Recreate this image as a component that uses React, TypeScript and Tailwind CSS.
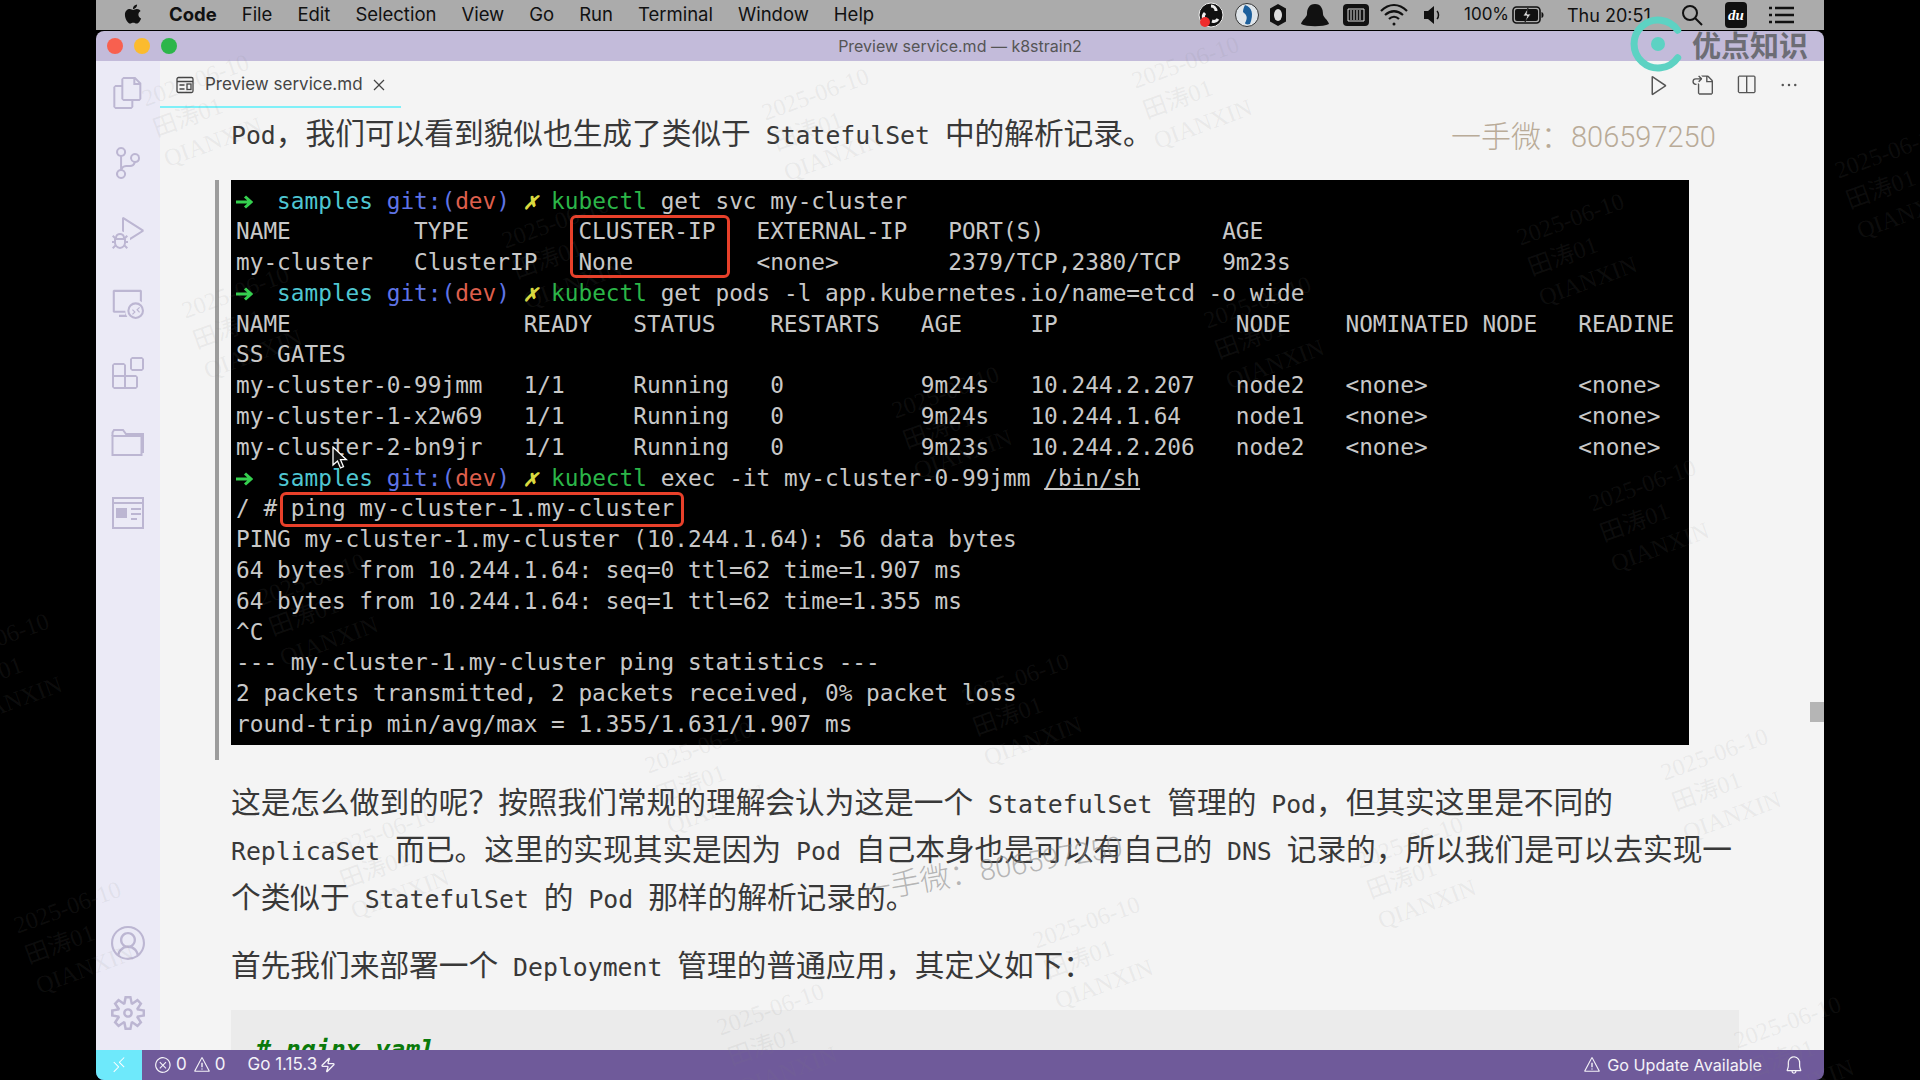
import React from "react";
import { FaApple } from "react-icons/fa";
import { Zap } from "lucide-react";
import {
  VscAccount,
  VscBell,
  VscClose,
  VscDebugAlt,
  VscEllipsis,
  VscError,
  VscExtensions,
  VscFiles,
  VscGoToFile,
  VscPlay,
  VscRemote,
  VscRemoteExplorer,
  VscSettingsGear,
  VscSourceControl,
  VscSplitHorizontal,
  VscWarning,
} from "react-icons/vsc";

const menus = ["File", "Edit", "Selection", "View", "Go", "Run", "Terminal", "Window", "Help"];

// watermark boxes, left / top of each stamp
const stamps = [
  [150, 48], [1140, 30], [770, 62], [1843, 120], [510, 190], [190, 260], [1525, 187],
  [1212, 270], [900, 360], [1597, 453], [266, 547], [-50, 607], [970, 647],
  [653, 715], [1669, 722], [337, 800], [1364, 810], [22, 875], [1041, 890], [725, 977], [1742, 990],
];

const FolderIcon = () => (
  <svg width="34" height="30" viewBox="0 0 34 30" fill="none" stroke="currentColor" strokeWidth="2">
    <path d="M1.5 27V8h29v19z" />
    <path d="M1.5 8V4.5L3 2h9l3 4h17v18h-2" />
  </svg>
);

const PanelIcon = () => (
  <svg width="34" height="34" viewBox="0 0 34 34" fill="none" stroke="currentColor" strokeWidth="2">
    <path d="M2 2h30v30H2zM2 7h30" />
    <path d="M5 12h11v10H5z" fill="currentColor" stroke="none" />
    <path d="M20 13h10M20 18h10M20 23h6" />
  </svg>
);

const PreviewTabIcon = () => (
  <svg width="18" height="18" viewBox="0 0 18 18" fill="none" stroke="currentColor" strokeWidth="1.300">
    <rect x="1" y="1.500" width="16" height="15" rx="1.500" />
    <path d="M1 5.500h16M3.500 9h5M3.500 13h5" />
    <rect x="11" y="8" width="4" height="5.500" />
  </svg>
);

const topIcons = [
  <VscFiles key="files" size={32} />,
  <VscSourceControl key="scm" size={32} />,
  <VscDebugAlt key="debug" size={32} />,
  <VscRemoteExplorer key="remote" size={32} />,
  <VscExtensions key="ext" size={32} />,
  <FolderIcon key="folder" />,
  <PanelIcon key="panel" />,
];

const Prompt = ({ children }: { children: React.ReactNode }) => (
  <div>
    <span className="inline-block w-[41.100px] align-middle">
      <svg width="17" height="14" viewBox="0 0 17 14" fill="none" stroke="#35d04f" strokeWidth="3">
        <path d="M0 7h14M9 1.500L15 7l-6 5.500" />
      </svg>
    </span>
    <span className="text-[#4fc6d2]">samples</span> <span className="text-[#5f74e6]">git:(</span>
    <span className="text-[#dd5f4c]">dev</span>
    <span className="text-[#5f74e6]">)</span> <span className="font-bold italic text-[#d9d93f]">✗</span>{" "}
    <span className="text-[#2bb648]">kubectl</span> {children}
  </div>
);

const Code = ({ children }: { children: string }) => (
  <span className="whitespace-pre text-[24.8px] leading-none [font-family:'DejaVu_Sans_Mono',monospace]">{children}</span>
);

const Terminal = () => (
  <div className="relative h-[565px] w-[1458px] overflow-hidden bg-black pl-[5px] pt-[6px] whitespace-pre text-[#c8c8c8] [font-family:'DejaVu_Sans_Mono',monospace] text-[22.76px] leading-[30.8px]">
    <Prompt>get svc my-cluster</Prompt>
    <div>NAME         TYPE        CLUSTER-IP   EXTERNAL-IP   PORT(S)             AGE</div>
    <div>my-cluster   ClusterIP   None         &lt;none&gt;        2379/TCP,2380/TCP   9m23s</div>
    <Prompt>get pods -l app.kubernetes.io/name=etcd -o wide</Prompt>
    <div>NAME                 READY   STATUS    RESTARTS   AGE     IP             NODE    NOMINATED NODE   READINE</div>
    <div>SS GATES</div>
    <div>my-cluster-0-99jmm   1/1     Running   0          9m24s   10.244.2.207   node2   &lt;none&gt;           &lt;none&gt;</div>
    <div>my-cluster-1-x2w69   1/1     Running   0          9m24s   10.244.1.64    node1   &lt;none&gt;           &lt;none&gt;</div>
    <div>my-cluster-2-bn9jr   1/1     Running   0          9m23s   10.244.2.206   node2   &lt;none&gt;           &lt;none&gt;</div>
    <Prompt>
      <>
        exec -it my-cluster-0-99jmm <span className="underline">/bin/sh</span>
      </>
    </Prompt>
    <div>/ # ping my-cluster-1.my-cluster</div>
    <div>PING my-cluster-1.my-cluster (10.244.1.64): 56 data bytes</div>
    <div>64 bytes from 10.244.1.64: seq=0 ttl=62 time=1.907 ms</div>
    <div>64 bytes from 10.244.1.64: seq=1 ttl=62 time=1.355 ms</div>
    <div>^C</div>
    <div>--- my-cluster-1.my-cluster ping statistics ---</div>
    <div>2 packets transmitted, 2 packets received, 0% packet loss</div>
    <div>round-trip min/avg/max = 1.355/1.631/1.907 ms</div>

    {/* red annotation boxes */}
    <div className="absolute left-[339px] top-[35px] h-[63px] w-[160px] rounded-[6px] border-[3px] border-[#e8402a]" />
    <div className="absolute left-[49px] top-[312px] h-[35px] w-[404px] rounded-[6px] border-[3px] border-[#e8402a]" />

    {/* mouse pointer */}
    <svg className="absolute left-[101px] top-[266px]" width="16" height="24" viewBox="0 0 16 24">
      <path d="M1 1v18l4.5-4 3 7 3-1.300-3-7h6z" fill="#111" stroke="#fff" strokeWidth="1.300" />
    </svg>
  </div>
);

const MenuBarRight = () => (
  <div className="flex items-center text-[#111]">
    {/* obs */}
    <svg width="26" height="26" viewBox="0 0 26 26">
      <circle cx="13" cy="13" r="12" fill="#111" stroke="#eee" />
      <path d="M13 4a5 5 0 0 1 5 5M6 17a5 5 0 0 1 1-6M20 17a5 5 0 0 1-6 2" stroke="#eee" strokeWidth="3" fill="none" />
      <circle cx="7" cy="20" r="5" fill="#ee2b2b" />
    </svg>
    <svg width="24" height="26" viewBox="0 0 24 26" className="ml-[11px]">
      <circle cx="12" cy="13" r="11.500" fill="#dfe5ea" stroke="#333" />
      <path d="M10 3c7 2 9 9 5 19-3 1-5 0-5-1 3-5 2-8-2-11 0-3 1-5 2-7z" fill="#1c5f9c" />
    </svg>
    <svg width="20" height="24" viewBox="0 0 20 24" className="ml-[9px]">
      <path d="M10 1l8 4.500v13L10 23l-8-4.500v-13z" fill="#111" />
      <ellipse cx="10" cy="12" rx="4" ry="6" fill="#ddd" />
    </svg>
    <svg width="30" height="24" viewBox="0 0 30 24" className="ml-[12px]">
      <path d="M15 1c6 0 8 5 8 10 0 3 5 6 6 10-6 3-22 3-28 0 1-4 6-7 6-10 0-5 2-10 8-10z" fill="#111" />
    </svg>
    <svg width="26" height="24" viewBox="0 0 26 24" className="ml-[13px]">
      <rect x="0" y="1" width="26" height="22" rx="4" fill="#111" />
      <path d="M5 6h16v12H5z" fill="none" stroke="#ddd" />
      <path d="M8 7v10M11 7v10M14 7v10M17 7v10" stroke="#ddd" />
    </svg>
    <svg width="28" height="24" viewBox="0 0 28 24" fill="none" stroke="#111" strokeWidth="2.200" className="ml-[11px]">
      <path d="M1 8c8-8 18-8 26 0M5 12c6-5 12-5 18 0M9 16c3-3 7-3 10 0" />
      <circle cx="14" cy="21" r="1.500" fill="#111" stroke="none" />
    </svg>
    <svg width="18" height="20" viewBox="0 0 18 20" className="ml-[16px]">
      <path d="M0 6h4l6-5v18l-6-5H0z" fill="#111" />
      <path d="M13 6c2 2 2 6 0 8" stroke="#111" strokeWidth="1.500" fill="none" />
    </svg>
    <span className="ml-[22px] w-[48px] text-[17px]">100%</span>
    <svg width="32" height="20" viewBox="0 0 32 20">
      <rect x="1" y="2" width="27" height="16" rx="3.500" fill="none" stroke="#111" strokeWidth="1.600" />
      <rect x="3" y="4" width="23" height="12" rx="2" fill="#111" />
      <path d="M29.500 7v6c1.500-.5 2-1.500 2-3s-.5-2.500-2-3z" fill="#111" />
      <path d="M16 3l-5 8h4l-2 6 6-8h-4z" fill="#ddd" stroke="#111" strokeWidth=".8" />
    </svg>
    <span className="ml-[23px] w-[88px] text-[18px]">Thu 20:51</span>
    <svg width="24" height="24" viewBox="0 0 24 24" fill="none" stroke="#111" strokeWidth="2" className="ml-[25px]">
      <circle cx="10" cy="10" r="7" />
      <path d="M15 15l7 7" />
    </svg>
    <span className="ml-[21px] flex h-[26px] w-[22px] items-center justify-center rounded-[4px] bg-[#111] text-[15px] font-bold italic text-white [font-family:'Liberation_Serif',serif]">
      du
    </span>
    <svg width="26" height="20" viewBox="0 0 26 20" stroke="#111" strokeWidth="2.600" className="ml-[21px]">
      <path d="M7 3h19M7 10h19M7 17h19M1 3h3M1 10h3M1 17h3" />
    </svg>
  </div>
);

export default function App() {
  return (
    <div className="relative flex h-[1080px] w-[1920px] justify-center overflow-hidden bg-black [font-family:Inter,sans-serif]">
      <div className="flex w-[1728px] flex-col">
        <header className="flex h-[30px] shrink-0 items-center justify-between bg-[#ababab] pl-[26px] pr-[30px] text-[#111]">
          <div className="flex items-center gap-[25px] text-[18.500px]">
            <FaApple size={22} className="-mt-[2px]" />
            <span className="font-bold">Code</span>
            {menus.map((m) => (
              <span key={m}>{m}</span>
            ))}
          </div>
          <MenuBarRight />
        </header>

        <div className="mt-[1px] flex flex-1 flex-col overflow-hidden rounded-[8px]">
          {/* title bar */}
          <div className="relative flex h-[30px] shrink-0 items-center justify-center bg-[#c3bbda] text-[16px] text-[#555]">
            <div className="absolute left-[11px] flex gap-[11px]">
              <span className="h-[16px] w-[16px] rounded-full bg-[#f8604f]" />
              <span className="h-[16px] w-[16px] rounded-full bg-[#fbbb2e]" />
              <span className="h-[16px] w-[16px] rounded-full bg-[#2cb64a]" />
            </div>
            Preview service.md — k8strain2
          </div>

          <div className="flex min-h-0 flex-1">
            {/* activity bar */}
            <aside className="flex w-[64px] shrink-0 flex-col justify-between overflow-hidden bg-[#ebeaf6] pb-[2px] text-[#bcb6d2]">
              <div className="-mt-[3px] flex flex-col">
                {topIcons.map((icon, i) => (
                  <div key={i} className="flex h-[70px] items-center justify-center">
                    {icon}
                  </div>
                ))}
              </div>
              <div className="flex flex-col">
                <div className="flex h-[70px] items-center justify-center">
                  <VscAccount size={34} />
                </div>
                <div className="flex h-[70px] items-center justify-center">
                  <VscSettingsGear size={34} />
                </div>
              </div>
            </aside>

            <main className="flex min-w-0 flex-1 flex-col bg-[#f4f4f4]">
              {/* tab row */}
              <div className="flex h-[47px] shrink-0 items-center justify-between">
                <div className="flex h-full w-[241px] items-center border-b-2 border-[#7ff0f8] pl-[16px] pt-[2px] text-[17px] text-[#444]">
                  <PreviewTabIcon />
                  <span className="ml-[11px]">Preview service.md</span>
                  <VscClose size={20} className="ml-[6px]" />
                </div>
                <div className="flex items-center gap-[22px] pr-[25px] text-[#555]">
                  <VscPlay size={24} className="-mr-[2px]" />
                  <VscGoToFile size={22} />
                  <VscSplitHorizontal size={22} />
                  <VscEllipsis size={20} />
                </div>
              </div>

              {/* markdown preview */}
              <div className="relative min-h-0 flex-1 overflow-hidden pl-[55px] text-[29.7px] leading-[47.5px] text-[#383838] [font-family:'Noto_Sans_CJK_SC',sans-serif]">
                <p className="ml-[16px] whitespace-nowrap">
                  <Code>Pod</Code>，我们可以看到貌似也生成了类似于<Code> StatefulSet </Code>中的解析记录。
                </p>
                <blockquote className="mt-[24px] h-[580px] border-l-4 border-[#9c9c9c] pl-[12px]">
                  <Terminal />
                </blockquote>
                <p className="ml-[16px] mt-[17px] whitespace-nowrap">
                  这是怎么做到的呢？按照我们常规的理解会认为这是一个<Code> StatefulSet </Code>管理的<Code> Pod</Code>，但其实这里是不同的
                  <br />
                  <Code>ReplicaSet </Code>而已。这里的实现其实是因为<Code> Pod </Code>自己本身也是可以有自己的<Code> DNS </Code>记录的，所以我们是可以去实现一
                  <br />
                  个类似于<Code> StatefulSet </Code>的<Code> Pod </Code>那样的解析记录的。
                </p>
                <p className="ml-[16px] mt-[21px] whitespace-nowrap">
                  首先我们来部署一个<Code> Deployment </Code>管理的普通应用，其定义如下：
                </p>
                <div className="ml-[16px] mt-[22px] h-[80px] w-[1508px] bg-[#ebebeb] pl-[25px] pt-[22px]">
                  <div className="text-[24.8px] font-bold italic leading-[36px] text-[#0b7a0b] [font-family:'DejaVu_Sans_Mono',monospace]">
                    # nginx.yaml
                  </div>
                </div>
                {/* scrollbar thumb */}
                <div className="absolute right-0 top-[594px] h-[20px] w-[14px] bg-[#b5b5b5]" />
              </div>
            </main>
          </div>

          {/* status bar */}
          <footer className="flex h-[30px] shrink-0 items-center justify-between bg-[#6f5a9a] pr-[20px] text-[17px] text-[#f4f2f8]">
            <div className="flex h-full items-center">
              <div className="flex h-full w-[46px] items-center justify-center bg-[#6ee9fb] text-white">
                <VscRemote size={18} />
              </div>
              <VscError size={18} className="ml-[12px]" />
              <span className="ml-[4px]">0</span>
              <VscWarning size={18} className="ml-[6px]" />
              <span className="ml-[4px]">0</span>
              <span className="ml-[22px]">Go 1.15.3</span>
              <Zap size={16} className="ml-[3px]" />
            </div>
            <div className="flex items-center">
              <VscWarning size={18} />
              <span className="ml-[6px] text-[16.200px]">Go Update Available</span>
              <VscBell size={20} className="ml-[22px]" />
            </div>
          </footer>
        </div>
      </div>

      {/* recording watermarks */}
      <div className="pointer-events-none absolute inset-0">
        {stamps.map(([left, top], i) => (
          <div
            key={i}
            className="absolute w-[125px] -rotate-[20deg] whitespace-nowrap text-[24px] leading-[32px] text-[#8080801a] [font-family:'Liberation_Serif','Noto_Sans_CJK_SC',serif]"
            style={{ left, top: top + 12 }}
          >
            2025-06-10
            <br />
            田涛01
            <br />
            QIANXIN
          </div>
        ))}
      </div>

      {/* course logo stamp */}
      <div className="absolute left-[1628px] top-[14px] flex items-center">
        <svg width="60" height="60" viewBox="0 0 60 60" fill="none">
          <path d="M49.700 16.200A24 24 0 1 0 49.700 43.800" stroke="#5dd2c3" strokeWidth="7" strokeLinecap="round" />
          <circle cx="30" cy="30" r="7" fill="#5dd2c3" />
        </svg>
        <span className="ml-[4px] text-[29px] font-bold leading-[36px] text-[#6d6d75] [font-family:'Noto_Sans_CJK_SC',sans-serif]">
          优点知识
        </span>
      </div>

      <div className="absolute left-[1451px] top-[114px] text-[30px] font-light leading-[40px] text-[#b9ab98] [font-family:'Noto_Sans_CJK_SC',sans-serif]">
        一手微：<span className="text-[29px] [font-family:Roboto,sans-serif]">806597250</span>
      </div>
      <div className="absolute left-[859px] top-[846px] -rotate-[10deg] text-[30px] font-light leading-[40px] text-[#8a8a8a99] [font-family:'Noto_Sans_CJK_SC',sans-serif]">
        一手微：<span className="text-[29px] [font-family:Roboto,sans-serif]">806597250</span>
      </div>
    </div>
  );
}
